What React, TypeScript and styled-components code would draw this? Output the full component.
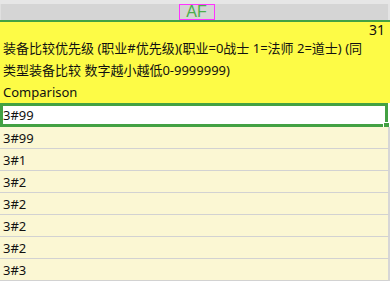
import React from "react";
import styled, { createGlobalStyle } from "styled-components";

const Global = createGlobalStyle`
  html, body {
    margin: 0;
    padding: 0;
    background: #ffffff;
  }
  body {
    font-family: "Noto Sans", "Noto Sans CJK SC", sans-serif;
    color: #111111;
  }
`;

const Sheet = styled.div`
  width: 390px;
  height: 283px;
  overflow: hidden;
  display: flex;
  flex-direction: column;
  background: #ffffff;
`;

const TopStrip = styled.div`
  height: 4px;
  background: #e6e6e6;
  flex: none;
`;

const ColumnHeader = styled.div`
  height: 16px;
  flex: none;
  display: flex;
  justify-content: center;
  background: #d5d5d5;
  border-left: 1px solid #e0e0e0;
  border-right: 2px solid #e4e4e4;
`;

const ColumnLabel = styled.div`
  width: 34px;
  height: 14px;
  margin-left: 4px;
  border: 1px solid #ff33ff;
  display: flex;
  align-items: center;
  justify-content: center;
  font-family: "Liberation Sans", Arial, sans-serif;
  font-size: 16px;
  line-height: 14px;
  color: #4cae4c;
`;

const HeaderRule = styled.div`
  height: 2px;
  flex: none;
  background: #43a143;
`;

const HeaderCell = styled.div`
  height: 81px;
  flex: none;
  box-sizing: border-box;
  background: #fdfb46;
  padding: 0 5px 0 3px;
  font-size: 13px;
  line-height: 22px;
`;

const ColumnIndex = styled.div`
  text-align: right;
  line-height: 15px;
  font-size: 14px;
`;

const Description = styled.div`
  white-space: nowrap;
`;

const Row = styled.div<{ $selected?: boolean }>`
  position: relative;
  flex: none;
  box-sizing: border-box;
  height: ${(p) => (p.$selected ? "24px" : "22px")};
  display: flex;
  align-items: center;
  padding-left: ${(p) => (p.$selected ? "0" : "3px")};
  font-size: 13px;
  background: ${(p) => (p.$selected ? "#ffffff" : "#fbf7d3")};
  border: ${(p) => (p.$selected ? "3px solid #43a143" : "none")};
  border-right: ${(p) => (p.$selected ? "3px solid #43a143" : "2px solid #d6d6d6")};
  border-bottom: ${(p) => (p.$selected ? "3px solid #43a143" : "1px solid #d2d2d2")};
  margin-right: ${(p) => (p.$selected ? "2px" : "0")};
`;

const FillHandle = styled.div`
  position: absolute;
  right: -5px;
  bottom: -5px;
  width: 5px;
  height: 5px;
  background: #43a143;
  border: 1px solid #ffffff;
`;

const descriptionLines = [
  "装备比较优先级 (职业#优先级)(职业=0战士 1=法师 2=道士) (同",
  "类型装备比较 数字越小越低0-9999999)",
  "Comparison",
];

const values = ["3#99", "3#1", "3#2", "3#2", "3#2", "3#2", "3#3"];

export default function App() {
  return (
    <>
      <Global />
      <Sheet>
        <TopStrip />
        <ColumnHeader>
          <ColumnLabel>AF</ColumnLabel>
        </ColumnHeader>
        <HeaderRule />
        <HeaderCell>
          <ColumnIndex>31</ColumnIndex>
          {descriptionLines.map((line, i) => (
            <Description key={i}>{line}</Description>
          ))}
        </HeaderCell>
        <Row $selected>
          3#99
          <FillHandle />
        </Row>
        {values.map((v, i) => (
          <Row key={i}>{v}</Row>
        ))}
      </Sheet>
    </>
  );
}
